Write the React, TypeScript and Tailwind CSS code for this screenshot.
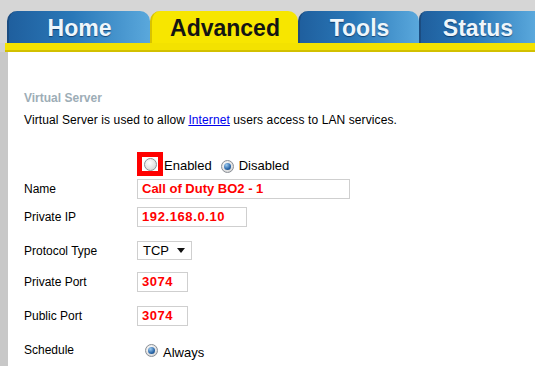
import React from 'react';

function Radio({ checked }: { checked?: boolean }) {
  return (
    <span
      className="inline-flex items-center justify-center w-[13px] h-[13px] rounded-full border border-[#8a8f96] shrink-0"
      style={{ background: 'radial-gradient(circle at 40% 35%, #ffffff, #dcdcdc 70%, #c4c4c4)' }}
    >
      {checked && (
        <span
          className="w-[7px] h-[7px] rounded-full"
          style={{ background: 'radial-gradient(circle at 35% 30%, #9ccbf0, #2a66a8 60%, #123e6e)' }}
        />
      )}
    </span>
  );
}

function Tab({ label, active, w, last }: { label: string; active?: boolean; w: string; last?: boolean }) {
  if (active) {
    return (
      <div className={`${w} h-[32px] rounded-t-[10px] bg-[#f7e600] border-l-2 border-[#d8c200] flex items-center justify-center z-10`}>
        <span className="text-[23px] font-bold text-[#141414] leading-none mt-[2px]">{label}</span>
      </div>
    );
  }
  return (
    <div
      className={`${w} h-[32px] ${last ? 'rounded-tl-[8px]' : 'rounded-t-[10px]'} flex items-center justify-center border-l-2 border-[#1b4c80]`}
      style={{ background: 'linear-gradient(90deg, #1f5f9e 0%, #2a78b8 45%, #5aa8dc 100%)' }}
    >
      <span className="text-[23px] font-bold text-[#eef6fb] leading-none mt-[2px] [text-shadow:0_1px_1px_rgba(0,30,70,0.6)]">
        {label}
      </span>
    </div>
  );
}

const field =
  'h-[20px] border border-[#cfcfcf] flex items-center pl-[4px] text-[#ff0000] font-bold text-[13px]';

export default function App() {
  return (
    <div className="w-[535px] h-[366px] overflow-hidden bg-white font-['Liberation_Sans',Arial,sans-serif]">
      <div className="bg-[#d6d6d6] pt-[11px] pl-[7px]">
        <div className="flex">
          <Tab label="Home" w="w-[143px]" />
          <Tab label="Advanced" w="w-[148px]" active />
          <Tab label="Tools" w="w-[121px]" />
          <Tab label="Status" w="w-[116px]" last />
        </div>
      </div>
      <div className="bg-[#d0d0d0] pl-[5px]">
        <div className="h-[9px] bg-[#f3e200] border-b-2 border-[#d2c000]" />
      </div>
      <div className="flex h-full">
        <div className="w-[8px] bg-[#c8c8c8] shrink-0" />
        <div className="pl-[16px] text-[12px] text-black">
          <div className="mt-[39px] font-bold text-[#9dadb6] leading-[15px]">Virtual Server</div>
          <div className="mt-[7px] leading-[15px] tracking-[0.1px]">
            Virtual Server is used to allow{' '}
            <span className="text-[#0000ee] underline">Internet</span> users access to LAN services.
          </div>

          <div className="mt-[24px] ml-[113px] flex items-center h-[24px]">
            <span className="w-[26px] h-[24px] border-[5px] border-[#ff0000] flex items-center justify-center">
              <Radio />
            </span>
            <span className="ml-[1px] mt-[4px] text-[13px]">Enabled</span>
            <span className="ml-[9px] mt-[4px]">
              <Radio checked />
            </span>
            <span className="ml-[5px] mt-[4px] text-[13px]">Disabled</span>
          </div>

          <div className="mt-[3px] flex items-center h-[20px]">
            <span className="w-[113px]">Name</span>
            <span className={`w-[213px] ${field}`}>Call of Duty BO2 - 1</span>
          </div>

          <div className="mt-[8px] flex items-center h-[20px]">
            <span className="w-[113px]">Private IP</span>
            <span className={`w-[110px] ${field} tracking-[0.6px]`}>192.168.0.10</span>
          </div>

          <div className="mt-[14px] flex items-center h-[19px]">
            <span className="w-[113px]">Protocol Type</span>
            <span className="w-[55px] h-[19px] border border-[#cfcfcf] flex items-center justify-between pl-[5px] pr-[6px] text-[13px]">
              TCP
              <svg width="8" height="5" viewBox="0 0 8 5">
                <path d="M0 0h8L4 5z" fill="#111" />
              </svg>
            </span>
          </div>

          <div className="mt-[12px] flex items-center h-[20px]">
            <span className="w-[113px]">Private Port</span>
            <span className={`w-[51px] ${field} tracking-[0.5px]`}>3074</span>
          </div>

          <div className="mt-[14px] flex items-center h-[20px]">
            <span className="w-[113px]">Public Port</span>
            <span className={`w-[51px] ${field} tracking-[0.5px]`}>3074</span>
          </div>

          <div className="mt-[16px] flex items-center h-[16px]">
            <span className="w-[121px]">Schedule</span>
            <Radio checked />
            <span className="ml-[5px] mt-[6px] text-[13px]">Always</span>
          </div>
        </div>
      </div>
    </div>
  );
}
